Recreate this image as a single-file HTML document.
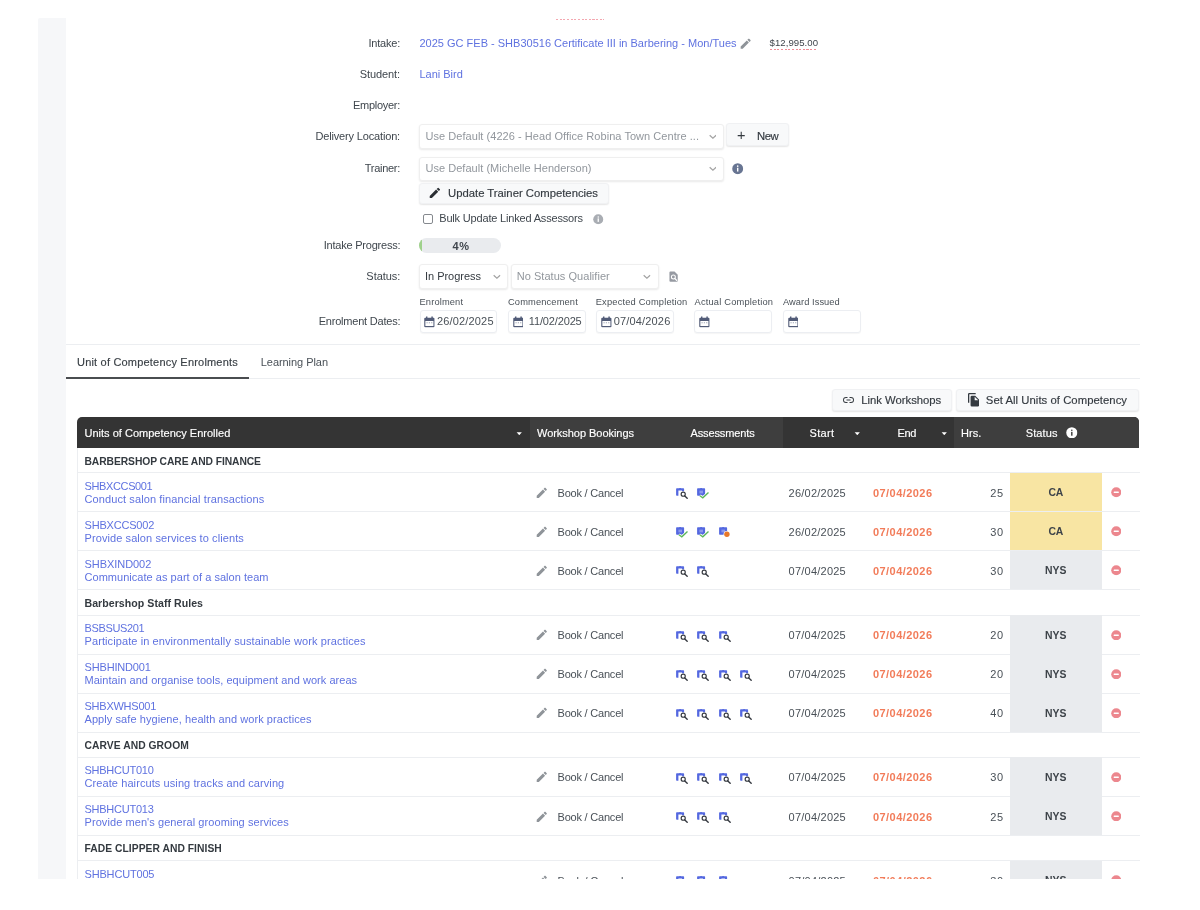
<!DOCTYPE html>
<html lang="en">
<head>
<meta charset="utf-8">
<title>Enrolment</title>
<style>
*{box-sizing:border-box;margin:0;padding:0}
html,body{width:1200px;height:910px;background:#fff;overflow:hidden}
body{font-family:"Liberation Sans",sans-serif;font-size:11px;color:#495057;position:relative}
.abs{position:absolute;white-space:nowrap}
#wrap{position:absolute;left:0;top:0;width:1200px;height:910px;will-change:transform}
#band{left:38.300px;top:18px;width:27.400px;height:860.700px;background:#f6f7f9;border-top-left-radius:2px}
.dash{height:1px;background:repeating-linear-gradient(90deg,#f08a95 0,#f08a95 2.200px,transparent 2.200px,transparent 3.650px)}
.med{-webkit-text-stroke:.16px currentColor}
.sel{border:1px solid #efefef;border-radius:3px;background:#fff;box-shadow:0 1px 2px rgba(0,0,0,.09)}
.btn{border-radius:3px;background:#f8f9fa;border:1px solid #f0f1f3;box-shadow:0 1px 1.500px rgba(0,0,0,.10)}
.din{border:1px solid #eceef2;border-radius:3px;background:#fff;box-shadow:0 1px 1px rgba(0,0,0,.04)}
.hr{left:65.500px;width:1074.500px;height:1px;background:#eceef1}
.cal{width:10.800px;height:11.800px;color:#525c78}
#t1{letter-spacing:-0.214px}#t2{letter-spacing:0.002px}#t3{letter-spacing:0.043px}#t4{letter-spacing:-0.105px}#t5{letter-spacing:-0.021px}#t6{letter-spacing:-0.285px}#t7{letter-spacing:-0.158px}#t8{letter-spacing:0.046px}#t9{letter-spacing:0.331px}#t10{letter-spacing:-0.505px}#t11{letter-spacing:-0.286px}#t12{letter-spacing:0.030px}#t13{letter-spacing:-0.003px}#t14{letter-spacing:-0.179px}#t15{letter-spacing:-0.220px}#t16{letter-spacing:0.594px}#t17{letter-spacing:-0.042px}#t18{letter-spacing:-0.025px}#t19{letter-spacing:0.037px}#t20{letter-spacing:0.141px}#t21{letter-spacing:0.141px}#t22{letter-spacing:0.174px}#t23{letter-spacing:0.190px}#t24{letter-spacing:0.053px}#t25{letter-spacing:-0.212px}#t26{letter-spacing:0.160px}#t27{letter-spacing:-0.139px}#t28{letter-spacing:0.160px}#t29{letter-spacing:0.195px}#t30{letter-spacing:-0.053px}#t31{letter-spacing:-0.013px}#t32{letter-spacing:0.045px}#t33{letter-spacing:0.009px}#t34{letter-spacing:-0.039px}#t35{letter-spacing:-0.117px}#t36{letter-spacing:0.316px}#t37{letter-spacing:-0.339px}#t38{letter-spacing:0.043px}#t39{letter-spacing:0.123px}#t40{letter-spacing:-0.077px}#t41{letter-spacing:-0.366px}#t42{letter-spacing:0.104px}#t43{letter-spacing:-0.207px}#t44{letter-spacing:0.232px}#t45{letter-spacing:0.438px}#t46{letter-spacing:0.450px}#t47{letter-spacing:-0.116px}#t48{letter-spacing:-0.194px}#t49{letter-spacing:0.087px}#t50{letter-spacing:-0.207px}#t51{letter-spacing:0.232px}#t52{letter-spacing:0.438px}#t53{letter-spacing:0.450px}#t54{letter-spacing:-0.116px}#t55{letter-spacing:-0.052px}#t56{letter-spacing:0.035px}#t57{letter-spacing:-0.207px}#t58{letter-spacing:0.232px}#t59{letter-spacing:0.438px}#t60{letter-spacing:0.450px}#t61{letter-spacing:0.062px}#t62{letter-spacing:0.036px}#t63{letter-spacing:-0.361px}#t64{letter-spacing:0.094px}#t65{letter-spacing:-0.207px}#t66{letter-spacing:0.232px}#t67{letter-spacing:0.438px}#t68{letter-spacing:0.450px}#t69{letter-spacing:0.062px}#t70{letter-spacing:-0.162px}#t71{letter-spacing:0.045px}#t72{letter-spacing:-0.207px}#t73{letter-spacing:0.232px}#t74{letter-spacing:0.438px}#t75{letter-spacing:0.450px}#t76{letter-spacing:0.062px}#t77{letter-spacing:-0.243px}#t78{letter-spacing:0.072px}#t79{letter-spacing:-0.207px}#t80{letter-spacing:0.232px}#t81{letter-spacing:0.438px}#t82{letter-spacing:0.450px}#t83{letter-spacing:0.062px}#t84{letter-spacing:0.054px}#t85{letter-spacing:-0.248px}#t86{letter-spacing:0.089px}#t87{letter-spacing:-0.207px}#t88{letter-spacing:0.232px}#t89{letter-spacing:0.438px}#t90{letter-spacing:0.450px}#t91{letter-spacing:0.062px}#t92{letter-spacing:-0.248px}#t93{letter-spacing:0.076px}#t94{letter-spacing:-0.207px}#t95{letter-spacing:0.232px}#t96{letter-spacing:0.438px}#t97{letter-spacing:0.450px}#t98{letter-spacing:0.062px}#t99{letter-spacing:0.040px}#t100{letter-spacing:-0.170px}#t101{letter-spacing:0.036px}#t102{letter-spacing:-0.207px}#t103{letter-spacing:0.232px}#t104{letter-spacing:0.438px}#t105{letter-spacing:0.450px}#t106{letter-spacing:0.062px}
</style>
</head>
<body>
<svg width="0" height="0" style="position:absolute">
<defs>
<symbol id="i-pen" viewBox="0 0 24 24"><path d="M3 17.250V21h3.750L17.810 9.940l-3.750-3.750L3 17.250zM20.710 7.040a1 1 0 0 0 0-1.410l-2.340-2.340a1 1 0 0 0-1.410 0l-1.830 1.830 3.750 3.750 1.830-1.830z" fill="currentColor"/></symbol>
<symbol id="i-s" viewBox="0 0 13 11"><path d="M.1.900Q.1.200.800.200H3.200Q4.100-.500 5 .200H7.400Q8.100.200 8.100.900V3.300H6V2.500H2.400V7.800H.800Q.1 7.800.1 7.100Z" fill="#5468e0"/><circle cx="7.200" cy="6.200" r="2.050" fill="#fff" stroke="#34383f" stroke-width="1.150"/><path d="M8.800 7.900l2.400 2.400" stroke="#34383f" stroke-width="1.350" stroke-linecap="round"/></symbol>
<symbol id="i-c" viewBox="0 0 13 11"><path d="M.1.900Q.1.200.800.200H3.200Q4.100-.500 5 .200H7.400Q8.100.200 8.100.900V7.100Q8.100 7.800 7.400 7.800H.800Q.1 7.800.1 7.100Z" fill="#5468e0"/><path d="M2.400 2.600H6V5.400H2.400Z" fill="#8b98ec"/><path d="M2.900 7.700l2.900 2.100 5.700-5.400" fill="none" stroke="#fff" stroke-width="2.700"/><path d="M2.900 7.700l2.900 2.100 5.700-5.400" fill="none" stroke="#5cb65a" stroke-width="1.350"/></symbol>
<symbol id="i-d" viewBox="0 0 13 11"><path d="M.1.900Q.1.200.800.200H3.200Q4.100-.500 5 .200H7.400Q8.100.200 8.100.900V7.100Q8.100 7.800 7.400 7.800H.800Q.1 7.800.1 7.100Z" fill="#5468e0"/><path d="M2.400 2.600H6V5.400H2.400Z" fill="#8b98ec"/><circle cx="7.900" cy="7.200" r="3.300" fill="#fff"/><circle cx="7.900" cy="7.200" r="2.700" fill="#e8792b"/></symbol>
<symbol id="i-rm" viewBox="0 0 24 24"><circle cx="12" cy="12" r="11.500" fill="#ec878e"/><rect x="6" y="10.300" width="12" height="3.400" rx="1" fill="#fff"/></symbol>
<symbol id="i-info" viewBox="0 0 24 24"><circle cx="12" cy="12" r="11.500" fill="currentColor"/><rect x="10.500" y="10" width="3" height="8" fill="#fff"/><circle cx="12" cy="6.700" r="1.700" fill="#fff"/></symbol>
<symbol id="i-infow" viewBox="0 0 24 24"><circle cx="12" cy="12" r="11.500" fill="#fff"/><rect x="10.500" y="10" width="3" height="8" fill="#3e3e3e"/><circle cx="12" cy="6.700" r="1.700" fill="#3e3e3e"/></symbol>
<symbol id="i-cal" viewBox="0 0 22 24"><path d="M4 1h3v2.500h8V1h3v2.500h1.500a2 2 0 0 1 2 2V21a2 2 0 0 1-2 2h-17a2 2 0 0 1-2-2V5.500a2 2 0 0 1 2-2H4zM2.800 10v10.500h16.400V10z" fill="currentColor"/><path d="M5 12.500h2.500v2H5zM9.750 12.500h2.500v2h-2.500zM14.500 12.500H17v2h-2.500z" fill="currentColor" opacity=".55"/></symbol>
<symbol id="i-chev" viewBox="0 0 14 10"><path d="M1.200 2.200l5.800 5.300 5.800-5.300" fill="none" stroke="currentColor" stroke-width="2.200"/></symbol>
<symbol id="i-caret" viewBox="0 0 10 6"><path d="M0.500 0.500h9L5 5.500z" fill="#fff"/></symbol>
</defs>
</svg>
<div id="wrap">
<div id="band" class="abs"></div>
<div class="abs dash" style="left:556px;top:18.700px;width:47.700px;opacity:.75"></div>
<div class="abs " id="t1" style="top:36.19px;font-size:11px;line-height:14px;color:#3f464d;right:800px;">Intake:</div>
<div class="abs " id="t2" style="top:36.19px;font-size:11px;line-height:14px;color:#5f72e0;left:419.5px;">2025 GC FEB - SHB30516 Certificate III in Barbering - Mon/Tues</div>
<svg class="abs" style="left:738.600px;top:37.100px;width:13.300px;height:13.300px;color:#8f9499"><use href="#i-pen"/></svg>
<div class="abs " id="t3" style="top:36.47px;font-size:9.6px;line-height:14px;color:#3f454c;left:769.6px;">$12,995.00</div>
<div class="abs dash" style="left:769.500px;top:48.800px;width:47.700px"></div>
<div class="abs " id="t4" style="top:67.19px;font-size:11px;line-height:14px;color:#3f464d;right:800px;">Student:</div>
<div class="abs " id="t5" style="top:67.19px;font-size:11px;line-height:14px;color:#5f72e0;left:419.5px;">Lani Bird</div>
<div class="abs " id="t6" style="top:97.94px;font-size:11px;line-height:14px;color:#3f464d;right:800px;">Employer:</div>
<div class="abs " id="t7" style="top:129.19px;font-size:11px;line-height:14px;color:#3f464d;right:800px;">Delivery Location:</div>
<div class="abs sel" style="left:418.500px;top:124px;width:305px;height:24.500px"></div>
<div class="abs " id="t8" style="top:129.19px;font-size:11px;line-height:14px;color:#92979d;left:425.5px;">Use Default (4226 - Head Office Robina Town Centre ...</div>
<svg class="abs" style="left:708.500px;top:133.500px;width:7.800px;height:5.600px;color:#a3a3a3"><use href="#i-chev"/></svg>
<div class="abs btn" style="left:725.800px;top:123.200px;width:63.500px;height:23px"></div>
<div class="abs " id="t9" style="top:127.88px;font-size:14.5px;line-height:14px;color:#343a40;left:736.9px;">+</div>
<div class="abs med" id="t10" style="top:129.08px;font-size:11.3px;line-height:14px;color:#343a40;left:757px;">New</div>
<div class="abs " id="t11" style="top:161.19px;font-size:11px;line-height:14px;color:#3f464d;right:800px;">Trainer:</div>
<div class="abs sel" style="left:418.500px;top:156.750px;width:305px;height:24.500px"></div>
<div class="abs " id="t12" style="top:161.19px;font-size:11px;line-height:14px;color:#92979d;left:425.5px;">Use Default (Michelle Henderson)</div>
<svg class="abs" style="left:708.500px;top:166px;width:7.800px;height:5.600px;color:#a3a3a3"><use href="#i-chev"/></svg>
<svg class="abs" style="left:732.400px;top:163.400px;width:11.400px;height:11.400px;color:#687592"><use href="#i-info"/></svg>
<div class="abs btn" style="left:418.500px;top:182.800px;width:190.300px;height:21.600px"></div>
<svg class="abs" style="left:427.500px;top:185.800px;width:13.800px;height:13.800px;color:#2a2e33"><use href="#i-pen"/></svg>
<div class="abs med" id="t13" style="top:186.08px;font-size:11.3px;line-height:14px;color:#343a40;left:448px;">Update Trainer Competencies</div>
<div class="abs" style="left:423px;top:214.250px;width:9.500px;height:9.500px;border:1px solid #85898e;border-radius:2px;background:#fff"></div>
<div class="abs " id="t14" style="top:211.19px;font-size:11px;line-height:14px;color:#3f464d;left:439.25px;">Bulk Update Linked Assessors</div>
<svg class="abs" style="left:593.250px;top:214.250px;width:10.500px;height:10.500px;color:#a9adb3"><use href="#i-info"/></svg>
<div class="abs " id="t15" style="top:238.49px;font-size:11px;line-height:14px;color:#3f464d;right:799.7px;">Intake Progress:</div>
<div class="abs" style="left:419.250px;top:237.500px;width:82px;height:15.500px;border-radius:8px;background:#e9ebee;overflow:hidden"><div style="width:3px;height:16px;background:#9fd18b"></div></div>
<div class="abs " id="t16" style="top:238.69px;font-size:11px;line-height:14px;color:#40464d;font-weight:bold;left:452.5px;">4%</div>
<div class="abs " id="t17" style="top:269.19px;font-size:11px;line-height:14px;color:#3f464d;right:799.7px;">Status:</div>
<div class="abs sel" style="left:418.750px;top:264.300px;width:88.900px;height:24.500px"></div>
<div class="abs " id="t18" style="top:269.19px;font-size:11px;line-height:14px;color:#343a40;left:425px;">In Progress</div>
<svg class="abs" style="left:493.250px;top:273.800px;width:7.800px;height:5.600px;color:#a3a3a3"><use href="#i-chev"/></svg>
<div class="abs sel" style="left:510.500px;top:264.300px;width:148px;height:24.500px"></div>
<div class="abs " id="t19" style="top:269.19px;font-size:11px;line-height:14px;color:#92979d;left:516.75px;">No Status Qualifier</div>
<svg class="abs" style="left:643.250px;top:273.800px;width:7.800px;height:5.600px;color:#a3a3a3"><use href="#i-chev"/></svg>
<svg class="abs" style="left:669.250px;top:270.750px;width:9.200px;height:11.200px" viewBox="0 0 20 24"><path d="M3 1h9l7 7v13a2 2 0 0 1-2 2H3a2 2 0 0 1-2-2V3a2 2 0 0 1 2-2z" fill="#969aa2"/><circle cx="9.500" cy="13" r="4.300" fill="none" stroke="#fff" stroke-width="2.300"/><path d="M12.500 16l5 5" stroke="#fff" stroke-width="2.600"/></svg>
<div class="abs " id="t20" style="top:295.28px;font-size:9.3px;line-height:14px;color:#4a5158;left:419.5px;">Enrolment</div>
<div class="abs " id="t21" style="top:295.28px;font-size:9.3px;line-height:14px;color:#4a5158;left:508px;">Commencement</div>
<div class="abs " id="t22" style="top:295.28px;font-size:9.3px;line-height:14px;color:#4a5158;left:595.75px;">Expected Completion</div>
<div class="abs " id="t23" style="top:295.28px;font-size:9.3px;line-height:14px;color:#4a5158;left:694.5px;">Actual Completion</div>
<div class="abs " id="t24" style="top:295.28px;font-size:9.3px;line-height:14px;color:#4a5158;left:783px;">Award Issued</div>
<div class="abs " id="t25" style="top:313.69px;font-size:11px;line-height:14px;color:#3f464d;right:799.7px;">Enrolment Dates:</div>
<div class="abs din" style="left:419.5px;top:310px;width:77.5px;height:23px"></div>
<div class="abs din" style="left:508px;top:310px;width:77.5px;height:23px"></div>
<div class="abs din" style="left:596.25px;top:310px;width:77.5px;height:23px"></div>
<div class="abs din" style="left:694.25px;top:310px;width:77.5px;height:23px"></div>
<div class="abs din" style="left:782.5px;top:310px;width:78px;height:23px"></div>
<svg class="abs cal" style="left:424.25px;top:315.750px"><use href="#i-cal"/></svg>
<svg class="abs cal" style="left:512.5px;top:315.750px"><use href="#i-cal"/></svg>
<svg class="abs cal" style="left:601.25px;top:315.750px"><use href="#i-cal"/></svg>
<svg class="abs cal" style="left:699.25px;top:315.750px"><use href="#i-cal"/></svg>
<svg class="abs cal" style="left:787.5px;top:315.750px"><use href="#i-cal"/></svg>
<div class="abs " id="t26" style="top:314.19px;font-size:11px;line-height:14px;color:#495057;left:437px;">26/02/2025</div>
<div class="abs " id="t27" style="top:314.19px;font-size:11px;line-height:14px;color:#495057;left:528.75px;">11/02/2025</div>
<div class="abs " id="t28" style="top:314.19px;font-size:11px;line-height:14px;color:#495057;left:613.75px;">07/04/2026</div>
<div class="abs hr" style="top:344px"></div>
<div class="abs med" id="t29" style="top:355.44px;font-size:11px;line-height:14px;color:#3a4046;left:77px;">Unit of Competency Enrolments</div>
<div class="abs " id="t30" style="top:355.44px;font-size:11px;line-height:14px;color:#495057;left:260.75px;">Learning Plan</div>
<div class="abs hr" style="top:378px"></div>
<div class="abs" style="left:65.500px;top:376.500px;width:183.250px;height:2px;background:#4a4d50"></div>
<div class="abs btn" style="left:831.500px;top:389px;width:120px;height:21.500px"></div>
<svg class="abs" style="left:842.500px;top:397px;width:11px;height:6px" viewBox="0 0 22 12"><path d="M6 1.800H9V0H6a6 6 0 0 0 0 12h3v-1.800H6a4.200 4.200 0 0 1 0-8.400zM7 7h8V5H7zM16 0h-3v1.800h3a4.200 4.200 0 0 1 0 8.400h-3V12h3a6 6 0 0 0 0-12z" fill="#343a40"/></svg>
<div class="abs med" id="t31" style="top:393.28px;font-size:11.3px;line-height:14px;color:#343a40;left:861.25px;">Link Workshops</div>
<div class="abs btn" style="left:956px;top:389px;width:182.500px;height:21.500px"></div>
<svg class="abs" style="left:967.700px;top:393.200px;width:11.300px;height:13.500px" viewBox="0 0 22 26"><path d="M15 0H2.500A2.500 2.500 0 0 0 0 2.500V19h2.500V2.500H15zM14 5H7.500A2.500 2.500 0 0 0 5 7.500v16A2.500 2.500 0 0 0 7.500 26h12a2.500 2.500 0 0 0 2.500-2.500V13zm-1 9V7l7 7z" fill="#343a40"/></svg>
<div class="abs med" id="t32" style="top:393.28px;font-size:11.3px;line-height:14px;color:#343a40;left:985.8px;">Set All Units of Competency</div>
<div class="abs" style="left:77px;top:417.300px;width:1062px;height:30.700px;border-radius:5px 5px 0 0;overflow:hidden;background:#343434"><div class="abs" style="left:453px;top:0;width:252.500px;height:31px;background:#3e3e3e"></div><div class="abs" style="left:877px;top:0;width:185px;height:31px;background:#3e3e3e"></div></div>
<div class="abs med" id="t33" style="top:426.19px;font-size:11px;line-height:14px;color:#fff;left:84.5px;">Units of Competency Enrolled</div>
<div class="abs med" id="t34" style="top:426.19px;font-size:11px;line-height:14px;color:#fff;left:537px;">Workshop Bookings</div>
<div class="abs med" id="t35" style="top:426.19px;font-size:11px;line-height:14px;color:#fff;left:690.5px;">Assessments</div>
<div class="abs med" id="t36" style="top:426.19px;font-size:11px;line-height:14px;color:#fff;left:809.5px;">Start</div>
<div class="abs med" id="t37" style="top:426.19px;font-size:11px;line-height:14px;color:#fff;left:897.5px;">End</div>
<div class="abs med" id="t38" style="top:426.19px;font-size:11px;line-height:14px;color:#fff;left:961px;">Hrs.</div>
<div class="abs med" id="t39" style="top:426.19px;font-size:11px;line-height:14px;color:#fff;left:1025.7px;">Status</div>
<svg class="abs" style="left:515.8px;top:431.500px;width:6.500px;height:3.500px"><use href="#i-caret"/></svg>
<svg class="abs" style="left:853.5px;top:431.500px;width:6.500px;height:3.500px"><use href="#i-caret"/></svg>
<svg class="abs" style="left:940.5px;top:431.500px;width:6.500px;height:3.500px"><use href="#i-caret"/></svg>
<svg class="abs" style="left:1066px;top:426.750px;width:11.600px;height:11.600px"><use href="#i-infow"/></svg>
<div class="abs" style="left:76.500px;top:448px;width:1px;height:430.600px;background:#eceef1"></div>
<div class="abs" id="clip" style="left:0;top:0;width:1200px;height:878.600px;overflow:hidden">
<div class="abs" style="left:77px;top:472.0px;width:1063px;height:1px;background:#eceef1"></div>
<div class="abs " id="t40" style="top:454.63px;font-size:10.3px;line-height:14px;color:#343a40;font-weight:bold;left:84.5px;">BARBERSHOP CARE AND FINANCE</div>
<div class="abs" style="left:77px;top:511.25px;width:1063px;height:1px;background:#eceef1"></div>
<div class="abs " id="t41" style="top:478.69px;font-size:11px;line-height:14px;color:#5f72e0;left:84.5px;">SHBXCCS001</div>
<div class="abs " id="t42" style="top:491.69px;font-size:11px;line-height:14px;color:#5f72e0;left:84.5px;">Conduct salon financial transactions</div>
<svg class="abs" style="left:534.600px;top:485.9px;width:13.600px;height:13.600px;color:#8f9499"><use href="#i-pen"/></svg>
<div class="abs " id="t43" style="top:485.79px;font-size:11px;line-height:14px;color:#495057;left:557.5px;">Book / Cancel</div>
<svg class="abs" style="left:675.75px;top:488.0px;width:13px;height:11px;overflow:visible"><use href="#i-s"/></svg>
<svg class="abs" style="left:697.15px;top:488.0px;width:13px;height:11px;overflow:visible"><use href="#i-c"/></svg>
<div class="abs " id="t44" style="top:485.79px;font-size:11px;line-height:14px;color:#495057;left:788.6px;">26/02/2025</div>
<div class="abs " id="t45" style="top:485.79px;font-size:11px;line-height:14px;color:#f27c5a;font-weight:bold;left:873px;">07/04/2026</div>
<div class="abs " id="t46" style="top:485.79px;font-size:11px;line-height:14px;color:#495057;right:196.5px;">25</div>
<div class="abs" style="left:1010.300px;top:472.5px;width:91.900px;height:38.75px;background:#f8e5a3"></div>
<div class="abs " id="t47" style="top:486.00px;font-size:10.4px;line-height:14px;color:#3d4349;font-weight:bold;left:1055.8px;transform:translateX(-50%);">CA</div>
<svg class="abs" style="left:1110.900px;top:487.1px;width:10.500px;height:10.500px"><use href="#i-rm"/></svg>
<div class="abs" style="left:77px;top:550.25px;width:1063px;height:1px;background:#eceef1"></div>
<div class="abs " id="t48" style="top:517.94px;font-size:11px;line-height:14px;color:#5f72e0;left:84.5px;">SHBXCCS002</div>
<div class="abs " id="t49" style="top:530.94px;font-size:11px;line-height:14px;color:#5f72e0;left:84.5px;">Provide salon services to clients</div>
<svg class="abs" style="left:534.600px;top:525.15px;width:13.600px;height:13.600px;color:#8f9499"><use href="#i-pen"/></svg>
<div class="abs " id="t50" style="top:525.04px;font-size:11px;line-height:14px;color:#495057;left:557.5px;">Book / Cancel</div>
<svg class="abs" style="left:675.75px;top:527.25px;width:13px;height:11px;overflow:visible"><use href="#i-c"/></svg>
<svg class="abs" style="left:697.15px;top:527.25px;width:13px;height:11px;overflow:visible"><use href="#i-c"/></svg>
<svg class="abs" style="left:718.55px;top:527.25px;width:13px;height:11px;overflow:visible"><use href="#i-d"/></svg>
<div class="abs " id="t51" style="top:525.04px;font-size:11px;line-height:14px;color:#495057;left:788.6px;">26/02/2025</div>
<div class="abs " id="t52" style="top:525.04px;font-size:11px;line-height:14px;color:#f27c5a;font-weight:bold;left:873px;">07/04/2026</div>
<div class="abs " id="t53" style="top:525.04px;font-size:11px;line-height:14px;color:#495057;right:196.5px;">30</div>
<div class="abs" style="left:1010.300px;top:511.75px;width:91.900px;height:38.5px;background:#f8e5a3"></div>
<div class="abs " id="t54" style="top:525.25px;font-size:10.4px;line-height:14px;color:#3d4349;font-weight:bold;left:1055.8px;transform:translateX(-50%);">CA</div>
<svg class="abs" style="left:1110.900px;top:526.35px;width:10.500px;height:10.500px"><use href="#i-rm"/></svg>
<div class="abs" style="left:77px;top:589.1px;width:1063px;height:1px;background:#eceef1"></div>
<div class="abs " id="t55" style="top:556.94px;font-size:11px;line-height:14px;color:#5f72e0;left:84.5px;">SHBXIND002</div>
<div class="abs " id="t56" style="top:569.94px;font-size:11px;line-height:14px;color:#5f72e0;left:84.5px;">Communicate as part of a salon team</div>
<svg class="abs" style="left:534.600px;top:564.15px;width:13.600px;height:13.600px;color:#8f9499"><use href="#i-pen"/></svg>
<div class="abs " id="t57" style="top:564.04px;font-size:11px;line-height:14px;color:#495057;left:557.5px;">Book / Cancel</div>
<svg class="abs" style="left:675.75px;top:566.25px;width:13px;height:11px;overflow:visible"><use href="#i-s"/></svg>
<svg class="abs" style="left:697.15px;top:566.25px;width:13px;height:11px;overflow:visible"><use href="#i-s"/></svg>
<div class="abs " id="t58" style="top:564.04px;font-size:11px;line-height:14px;color:#495057;left:788.6px;">07/04/2025</div>
<div class="abs " id="t59" style="top:564.04px;font-size:11px;line-height:14px;color:#f27c5a;font-weight:bold;left:873px;">07/04/2026</div>
<div class="abs " id="t60" style="top:564.04px;font-size:11px;line-height:14px;color:#495057;right:196.5px;">30</div>
<div class="abs" style="left:1010.300px;top:550.75px;width:91.900px;height:38.35000000000002px;background:#e9ebee"></div>
<div class="abs " id="t61" style="top:564.25px;font-size:10.4px;line-height:14px;color:#3d4349;font-weight:bold;left:1055.8px;transform:translateX(-50%);">NYS</div>
<svg class="abs" style="left:1110.900px;top:565.35px;width:10.500px;height:10.500px"><use href="#i-rm"/></svg>
<div class="abs" style="left:77px;top:614.5px;width:1063px;height:1px;background:#eceef1"></div>
<div class="abs " id="t62" style="top:596.13px;font-size:10.6px;line-height:14px;color:#343a40;font-weight:bold;left:84.5px;">Barbershop Staff Rules</div>
<div class="abs" style="left:77px;top:653.5px;width:1063px;height:1px;background:#eceef1"></div>
<div class="abs " id="t63" style="top:621.19px;font-size:11px;line-height:14px;color:#5f72e0;left:84.5px;">BSBSUS201</div>
<div class="abs " id="t64" style="top:634.19px;font-size:11px;line-height:14px;color:#5f72e0;left:84.5px;">Participate in environmentally sustainable work practices</div>
<svg class="abs" style="left:534.600px;top:628.4px;width:13.600px;height:13.600px;color:#8f9499"><use href="#i-pen"/></svg>
<div class="abs " id="t65" style="top:628.29px;font-size:11px;line-height:14px;color:#495057;left:557.5px;">Book / Cancel</div>
<svg class="abs" style="left:675.75px;top:630.5px;width:13px;height:11px;overflow:visible"><use href="#i-s"/></svg>
<svg class="abs" style="left:697.15px;top:630.5px;width:13px;height:11px;overflow:visible"><use href="#i-s"/></svg>
<svg class="abs" style="left:718.55px;top:630.5px;width:13px;height:11px;overflow:visible"><use href="#i-s"/></svg>
<div class="abs " id="t66" style="top:628.29px;font-size:11px;line-height:14px;color:#495057;left:788.6px;">07/04/2025</div>
<div class="abs " id="t67" style="top:628.29px;font-size:11px;line-height:14px;color:#f27c5a;font-weight:bold;left:873px;">07/04/2026</div>
<div class="abs " id="t68" style="top:628.29px;font-size:11px;line-height:14px;color:#495057;right:196.5px;">20</div>
<div class="abs" style="left:1010.300px;top:615px;width:91.900px;height:38.5px;background:#e9ebee"></div>
<div class="abs " id="t69" style="top:628.50px;font-size:10.4px;line-height:14px;color:#3d4349;font-weight:bold;left:1055.8px;transform:translateX(-50%);">NYS</div>
<svg class="abs" style="left:1110.900px;top:629.6px;width:10.500px;height:10.500px"><use href="#i-rm"/></svg>
<div class="abs" style="left:77px;top:692.5px;width:1063px;height:1px;background:#eceef1"></div>
<div class="abs " id="t70" style="top:660.19px;font-size:11px;line-height:14px;color:#5f72e0;left:84.5px;">SHBHIND001</div>
<div class="abs " id="t71" style="top:673.19px;font-size:11px;line-height:14px;color:#5f72e0;left:84.5px;">Maintain and organise tools, equipment and work areas</div>
<svg class="abs" style="left:534.600px;top:667.4px;width:13.600px;height:13.600px;color:#8f9499"><use href="#i-pen"/></svg>
<div class="abs " id="t72" style="top:667.29px;font-size:11px;line-height:14px;color:#495057;left:557.5px;">Book / Cancel</div>
<svg class="abs" style="left:675.75px;top:669.5px;width:13px;height:11px;overflow:visible"><use href="#i-s"/></svg>
<svg class="abs" style="left:697.15px;top:669.5px;width:13px;height:11px;overflow:visible"><use href="#i-s"/></svg>
<svg class="abs" style="left:718.55px;top:669.5px;width:13px;height:11px;overflow:visible"><use href="#i-s"/></svg>
<svg class="abs" style="left:739.95px;top:669.5px;width:13px;height:11px;overflow:visible"><use href="#i-s"/></svg>
<div class="abs " id="t73" style="top:667.29px;font-size:11px;line-height:14px;color:#495057;left:788.6px;">07/04/2025</div>
<div class="abs " id="t74" style="top:667.29px;font-size:11px;line-height:14px;color:#f27c5a;font-weight:bold;left:873px;">07/04/2026</div>
<div class="abs " id="t75" style="top:667.29px;font-size:11px;line-height:14px;color:#495057;right:196.5px;">20</div>
<div class="abs" style="left:1010.300px;top:654px;width:91.900px;height:38.5px;background:#e9ebee"></div>
<div class="abs " id="t76" style="top:667.50px;font-size:10.4px;line-height:14px;color:#3d4349;font-weight:bold;left:1055.8px;transform:translateX(-50%);">NYS</div>
<svg class="abs" style="left:1110.900px;top:668.6px;width:10.500px;height:10.500px"><use href="#i-rm"/></svg>
<div class="abs" style="left:77px;top:731.8px;width:1063px;height:1px;background:#eceef1"></div>
<div class="abs " id="t77" style="top:699.19px;font-size:11px;line-height:14px;color:#5f72e0;left:84.5px;">SHBXWHS001</div>
<div class="abs " id="t78" style="top:712.19px;font-size:11px;line-height:14px;color:#5f72e0;left:84.5px;">Apply safe hygiene, health and work practices</div>
<svg class="abs" style="left:534.600px;top:706.4px;width:13.600px;height:13.600px;color:#8f9499"><use href="#i-pen"/></svg>
<div class="abs " id="t79" style="top:706.29px;font-size:11px;line-height:14px;color:#495057;left:557.5px;">Book / Cancel</div>
<svg class="abs" style="left:675.75px;top:708.5px;width:13px;height:11px;overflow:visible"><use href="#i-s"/></svg>
<svg class="abs" style="left:697.15px;top:708.5px;width:13px;height:11px;overflow:visible"><use href="#i-s"/></svg>
<svg class="abs" style="left:718.55px;top:708.5px;width:13px;height:11px;overflow:visible"><use href="#i-s"/></svg>
<svg class="abs" style="left:739.95px;top:708.5px;width:13px;height:11px;overflow:visible"><use href="#i-s"/></svg>
<div class="abs " id="t80" style="top:706.29px;font-size:11px;line-height:14px;color:#495057;left:788.6px;">07/04/2025</div>
<div class="abs " id="t81" style="top:706.29px;font-size:11px;line-height:14px;color:#f27c5a;font-weight:bold;left:873px;">07/04/2026</div>
<div class="abs " id="t82" style="top:706.29px;font-size:11px;line-height:14px;color:#495057;right:196.5px;">40</div>
<div class="abs" style="left:1010.300px;top:693px;width:91.900px;height:38.799999999999955px;background:#e9ebee"></div>
<div class="abs " id="t83" style="top:706.50px;font-size:10.4px;line-height:14px;color:#3d4349;font-weight:bold;left:1055.8px;transform:translateX(-50%);">NYS</div>
<svg class="abs" style="left:1110.900px;top:707.6px;width:10.500px;height:10.500px"><use href="#i-rm"/></svg>
<div class="abs" style="left:77px;top:756.5px;width:1063px;height:1px;background:#eceef1"></div>
<div class="abs " id="t84" style="top:738.93px;font-size:10.3px;line-height:14px;color:#343a40;font-weight:bold;left:84.5px;">CARVE AND GROOM</div>
<div class="abs" style="left:77px;top:795.8px;width:1063px;height:1px;background:#eceef1"></div>
<div class="abs " id="t85" style="top:763.19px;font-size:11px;line-height:14px;color:#5f72e0;left:84.5px;">SHBHCUT010</div>
<div class="abs " id="t86" style="top:776.19px;font-size:11px;line-height:14px;color:#5f72e0;left:84.5px;">Create haircuts using tracks and carving</div>
<svg class="abs" style="left:534.600px;top:770.4px;width:13.600px;height:13.600px;color:#8f9499"><use href="#i-pen"/></svg>
<div class="abs " id="t87" style="top:770.29px;font-size:11px;line-height:14px;color:#495057;left:557.5px;">Book / Cancel</div>
<svg class="abs" style="left:675.75px;top:772.5px;width:13px;height:11px;overflow:visible"><use href="#i-s"/></svg>
<svg class="abs" style="left:697.15px;top:772.5px;width:13px;height:11px;overflow:visible"><use href="#i-s"/></svg>
<svg class="abs" style="left:718.55px;top:772.5px;width:13px;height:11px;overflow:visible"><use href="#i-s"/></svg>
<svg class="abs" style="left:739.95px;top:772.5px;width:13px;height:11px;overflow:visible"><use href="#i-s"/></svg>
<div class="abs " id="t88" style="top:770.29px;font-size:11px;line-height:14px;color:#495057;left:788.6px;">07/04/2025</div>
<div class="abs " id="t89" style="top:770.29px;font-size:11px;line-height:14px;color:#f27c5a;font-weight:bold;left:873px;">07/04/2026</div>
<div class="abs " id="t90" style="top:770.29px;font-size:11px;line-height:14px;color:#495057;right:196.5px;">30</div>
<div class="abs" style="left:1010.300px;top:757px;width:91.900px;height:38.799999999999955px;background:#e9ebee"></div>
<div class="abs " id="t91" style="top:770.50px;font-size:10.4px;line-height:14px;color:#3d4349;font-weight:bold;left:1055.8px;transform:translateX(-50%);">NYS</div>
<svg class="abs" style="left:1110.900px;top:771.6px;width:10.500px;height:10.500px"><use href="#i-rm"/></svg>
<div class="abs" style="left:77px;top:835.0px;width:1063px;height:1px;background:#eceef1"></div>
<div class="abs " id="t92" style="top:802.49px;font-size:11px;line-height:14px;color:#5f72e0;left:84.5px;">SHBHCUT013</div>
<div class="abs " id="t93" style="top:815.49px;font-size:11px;line-height:14px;color:#5f72e0;left:84.5px;">Provide men's general grooming services</div>
<svg class="abs" style="left:534.600px;top:809.6999999999999px;width:13.600px;height:13.600px;color:#8f9499"><use href="#i-pen"/></svg>
<div class="abs " id="t94" style="top:809.59px;font-size:11px;line-height:14px;color:#495057;left:557.5px;">Book / Cancel</div>
<svg class="abs" style="left:675.75px;top:811.8px;width:13px;height:11px;overflow:visible"><use href="#i-s"/></svg>
<svg class="abs" style="left:697.15px;top:811.8px;width:13px;height:11px;overflow:visible"><use href="#i-s"/></svg>
<svg class="abs" style="left:718.55px;top:811.8px;width:13px;height:11px;overflow:visible"><use href="#i-s"/></svg>
<div class="abs " id="t95" style="top:809.59px;font-size:11px;line-height:14px;color:#495057;left:788.6px;">07/04/2025</div>
<div class="abs " id="t96" style="top:809.59px;font-size:11px;line-height:14px;color:#f27c5a;font-weight:bold;left:873px;">07/04/2026</div>
<div class="abs " id="t97" style="top:809.59px;font-size:11px;line-height:14px;color:#495057;right:196.5px;">25</div>
<div class="abs" style="left:1010.300px;top:796.3px;width:91.900px;height:38.700000000000045px;background:#e9ebee"></div>
<div class="abs " id="t98" style="top:809.80px;font-size:10.4px;line-height:14px;color:#3d4349;font-weight:bold;left:1055.8px;transform:translateX(-50%);">NYS</div>
<svg class="abs" style="left:1110.900px;top:810.9px;width:10.500px;height:10.500px"><use href="#i-rm"/></svg>
<div class="abs" style="left:77px;top:860.0px;width:1063px;height:1px;background:#eceef1"></div>
<div class="abs " id="t99" style="top:842.13px;font-size:10.3px;line-height:14px;color:#343a40;font-weight:bold;left:84.5px;">FADE CLIPPER AND FINISH</div>
<div class="abs" style="left:77px;top:899.0px;width:1063px;height:1px;background:#eceef1"></div>
<div class="abs " id="t100" style="top:866.69px;font-size:11px;line-height:14px;color:#5f72e0;left:84.5px;">SHBHCUT005</div>
<div class="abs " id="t101" style="top:879.69px;font-size:11px;line-height:14px;color:#5f72e0;left:84.5px;">Design and perform creative haircuts</div>
<svg class="abs" style="left:534.600px;top:873.9px;width:13.600px;height:13.600px;color:#8f9499"><use href="#i-pen"/></svg>
<div class="abs " id="t102" style="top:873.79px;font-size:11px;line-height:14px;color:#495057;left:557.5px;">Book / Cancel</div>
<svg class="abs" style="left:675.75px;top:876.0px;width:13px;height:11px;overflow:visible"><use href="#i-s"/></svg>
<svg class="abs" style="left:697.15px;top:876.0px;width:13px;height:11px;overflow:visible"><use href="#i-s"/></svg>
<svg class="abs" style="left:718.55px;top:876.0px;width:13px;height:11px;overflow:visible"><use href="#i-s"/></svg>
<div class="abs " id="t103" style="top:873.79px;font-size:11px;line-height:14px;color:#495057;left:788.6px;">07/04/2025</div>
<div class="abs " id="t104" style="top:873.79px;font-size:11px;line-height:14px;color:#f27c5a;font-weight:bold;left:873px;">07/04/2026</div>
<div class="abs " id="t105" style="top:873.79px;font-size:11px;line-height:14px;color:#495057;right:196.5px;">30</div>
<div class="abs" style="left:1010.300px;top:860.5px;width:91.900px;height:38.5px;background:#e9ebee"></div>
<div class="abs " id="t106" style="top:874.00px;font-size:10.4px;line-height:14px;color:#3d4349;font-weight:bold;left:1055.8px;transform:translateX(-50%);">NYS</div>
<svg class="abs" style="left:1110.900px;top:875.1px;width:10.500px;height:10.500px"><use href="#i-rm"/></svg>
</div>
</div>
</body>
</html>
